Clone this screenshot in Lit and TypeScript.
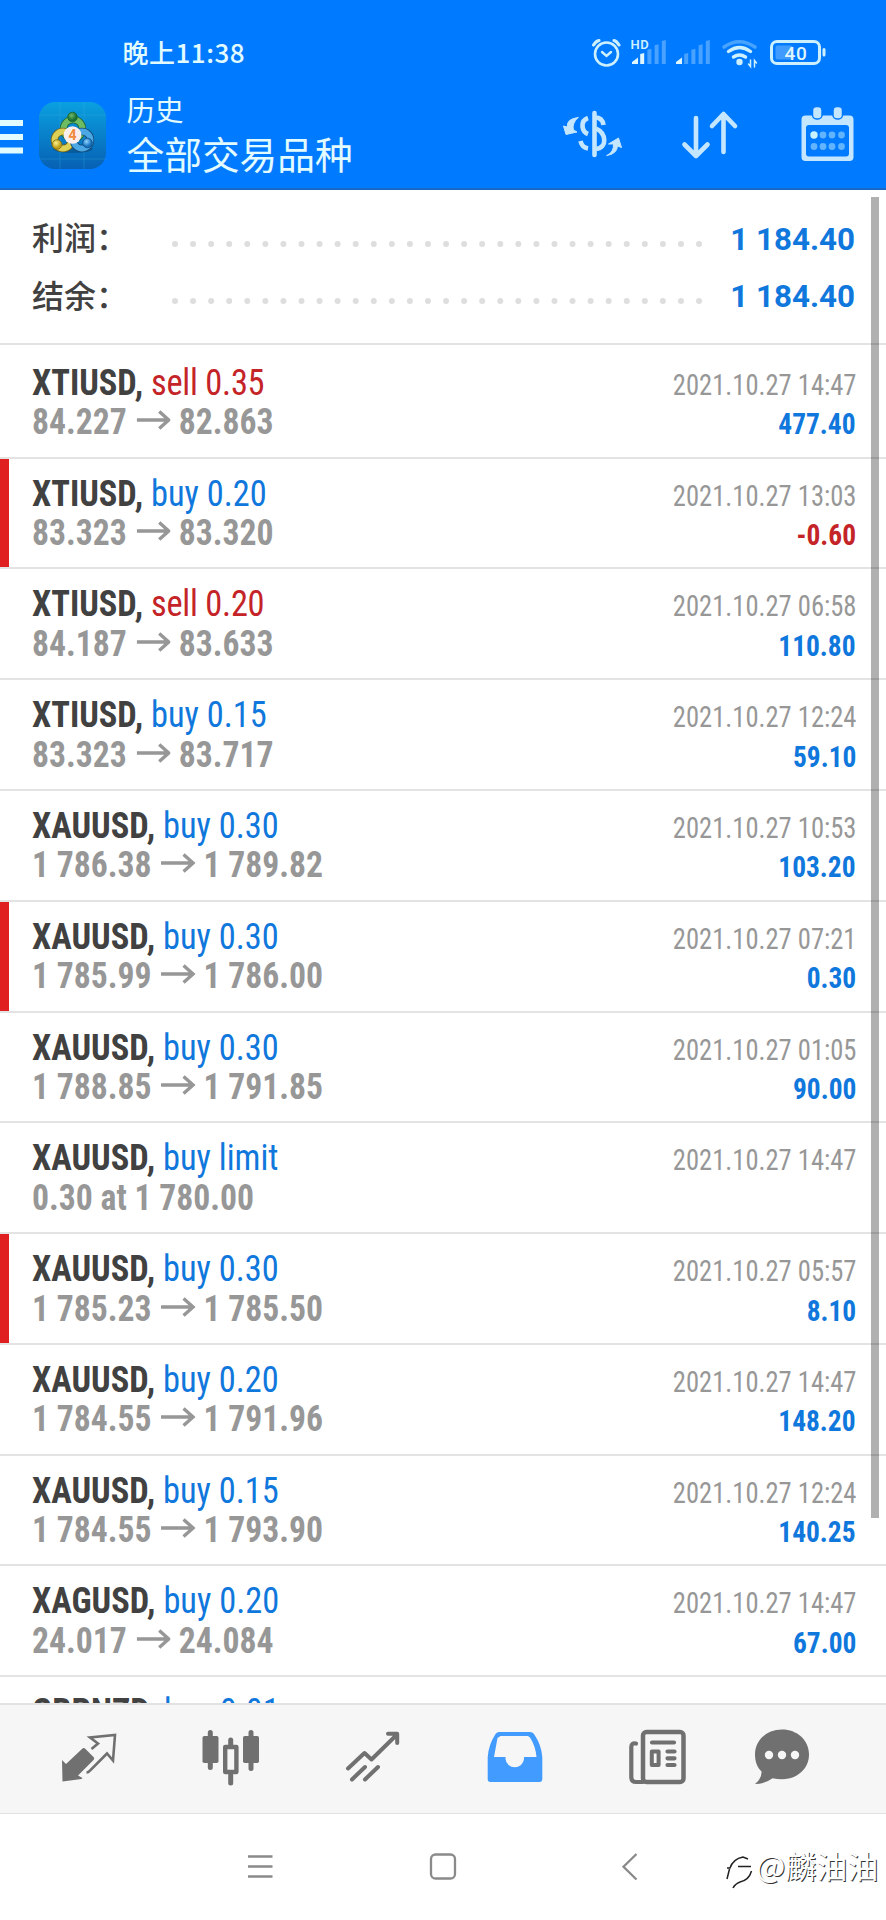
import { LitElement, html, css, svg, nothing } from "lit";
import { customElement, property } from "lit/decorators.js";

interface Deal {
  symbol: string;
  side: string;
  kind: "buy" | "sell";
  from: string;
  to?: string;
  time: string;
  value?: string;
  marked?: boolean;
}

const d = (symbol: string, side: string, from: string, to: string, time: string, value: string, marked = false): Deal => ({
  symbol, side, kind: side.startsWith("sell") ? "sell" : "buy", from, to, time: time && "2021.10.27 " + time, value, marked,
});

const DEALS: Deal[] = [
  d("XTIUSD", "sell 0.35", "84.227", "82.863", "14:47", "477.40"),
  d("XTIUSD", "buy 0.20", "83.323", "83.320", "13:03", "-0.60", true),
  d("XTIUSD", "sell 0.20", "84.187", "83.633", "06:58", "110.80"),
  d("XTIUSD", "buy 0.15", "83.323", "83.717", "12:24", "59.10"),
  d("XAUUSD", "buy 0.30", "1 786.38", "1 789.82", "10:53", "103.20"),
  d("XAUUSD", "buy 0.30", "1 785.99", "1 786.00", "07:21", "0.30", true),
  d("XAUUSD", "buy 0.30", "1 788.85", "1 791.85", "01:05", "90.00"),
  d("XAUUSD", "buy limit", "0.30 at 1 780.00", "", "14:47", ""),
  d("XAUUSD", "buy 0.30", "1 785.23", "1 785.50", "05:57", "8.10", true),
  d("XAUUSD", "buy 0.20", "1 784.55", "1 791.96", "14:47", "148.20"),
  d("XAUUSD", "buy 0.15", "1 784.55", "1 793.90", "12:24", "140.25"),
  d("XAGUSD", "buy 0.20", "24.017", "24.084", "14:47", "67.00"),
  d("GBPNZD", "buy 0.01", "", "", "", ""),
];

@customElement("deal-row")
export class DealRow extends LitElement {
  @property({ attribute: false }) deal!: Deal;
  @property({ type: Boolean }) lead = false;

  static styles = css`
    :host { display: block; }
    .row { display: flex; box-sizing: border-box; height: 110.77px; border-top: 2px solid #e3e3e3; overflow: hidden; }
    .lead { height: 113.3px; padding-top: 2.4px; }
    .mark { width: 9px; flex: none; }
    .on { background: #e02020; }
    .body { flex: 1; padding: 16px 30px 0 23px; }
    .line { display: flex; justify-content: space-between; align-items: baseline; height: 39.5px; line-height: 39.3px;
      font-family: "Roboto Condensed", Roboto, sans-serif; font-stretch: 75%; font-size: 36px; white-space: pre; }
    .head, .price { display: inline-block; transform-origin: 0 50%; }
    .head { transform: scaleX(.955); }
    .sym { font-weight: 700; color: #414141; }
    .buy { color: #1077dc; }
    .sell { color: #c42427; letter-spacing: -.25px; }
    .price { font-weight: 700; color: #979797; transform: scaleX(.935); }
    .arrow { width: 36.4px; height: 20px; margin: 0 8.5px 0 10.5px; vertical-align: 4px; }
    .time, .val { display: inline-block; font-size: 30px; transform-origin: 100% 50%; }
    .time { color: #979797; transform: scaleX(.885); }
    .val { font-weight: 700; color: #1077dc; transform: scaleX(.914); }
    .neg { color: #c42427; }
  `;

  render() {
    const x = this.deal;
    return html`<div class="row ${this.lead ? "lead" : ""}">
      <div class="mark ${x.marked ? "on" : ""}"></div>
      <div class="body">
        <div class="line"><span class="head"><span class="sym">${x.symbol},</span> <span class=${x.kind}>${x.side}</span></span><span class="time">${x.time}</span></div>
        <div class="line"><span class="price">${x.from}${x.to
          ? html`<svg class="arrow" viewBox="0 0 34 20" preserveAspectRatio="none"><path d="M0 10H32M22.5 1.5L32 10L22.5 18.5" fill="none" stroke="#979797" stroke-width="3.4"/></svg>${x.to}`
          : nothing}</span><span class="val ${x.value?.startsWith("-") ? "neg" : ""}">${x.value}</span></div>
      </div>
    </div>`;
  }
}

const bars = (x: number, lit: number) => svg`${[0, 1, 2, 3, 4].map(i => {
  const l = x + i * 7.2 + (i ? 0 : -1), w = i ? 4 : 6;
  const top = 57.5 - i * 4.4;
  return svg`<path d=${`M${l} 64V${i ? top + 1 : 62}L${l + w} ${top}V64Z`} fill="#dff6ff" opacity=${i < lit ? 1 : 0.33}/>`;
})}`;

@customElement("app-root")
export class AppRoot extends LitElement {
  static styles = css`
    :host { display: block; }
    .screen { position: relative; display: flex; flex-direction: column; width: 886px; height: 1920px; background: #fff; overflow: hidden; }
    svg { display: block; flex: none; }
    .top { flex: none; box-sizing: border-box; height: 190px; background: #007aff; border-bottom: 2px solid #1769c6; color: #e2fbff;
      font-family: "Noto Sans CJK SC", sans-serif; }
    .status { display: flex; justify-content: space-between; height: 90px; padding-left: 122.5px; }
    .clock { font-size: 26px; font-weight: 500; line-height: 36px; padding-top: 34px; letter-spacing: .5px; }
    .tools { display: flex; height: 98px; }
    .titles { flex: 1; padding-left: 20.5px; white-space: nowrap; }
    .sub { font-size: 28.5px; line-height: 38px; font-weight: 400; }
    .title { font-size: 37.7px; line-height: 46px; padding-top: 2px; }
    .summary { flex: none; box-sizing: border-box; height: 153.4px; padding: 19px 31px 0 32px; }
    .sum { display: flex; height: 57.5px; align-items: center; }
    .lab { width: 139px; font: 500 32px/54px "Noto Sans CJK SC", sans-serif; height: 57.5px; color: #414141; white-space: nowrap; }
    .dots { margin-top: 12px; }
    .tot { flex: 1; text-align: right; font: 700 32px/60px Roboto, sans-serif; height: 58.5px; color: #1077dc; white-space: pre; transform: scaleX(.98); transform-origin: 100% 50%; }
    .list { flex: 1; min-height: 0; overflow: hidden; }
    .scroll { position: absolute; left: 871px; top: 197px; width: 8px; height: 1321px; background: rgba(0,0,0,.31); }
    .tabs { flex: none; display: flex; box-sizing: border-box; height: 111px; border-top: 2px solid #e2e2e2; border-bottom: 1px solid #e2e2e2; background: #f6f6f6; padding-left: 18px; }
    .sys { flex: none; display: flex; height: 106px; }
    .mark { width: 166px; height: 106px; display: flex; color: #fff; }
    .name { font: 400 31px/46px "Noto Sans CJK SC", sans-serif; padding-top: 28px; white-space: nowrap; text-shadow: 1px 1px 0 #333; }
  `;

  render() {
    const c = "#c4e6ff";
    const g = "#707070";
    return html`<div class="screen">
      <div class="top">
        <div class="status">
          <div class="clock">晚上11:38</div>
          <svg width="306" height="90" viewBox="580 0 306 90" fill="none" stroke="#cdf0ff" stroke-linecap="round">
            <circle cx="606.5" cy="54" r="11.5" stroke-width="2.6"/>
            <path d="M602 52L606.5 56L611 52" stroke-width="2.4"/>
            <path d="M593.5 45Q596 41 599 40.5M619 45Q616.500 41 614 40.500" stroke-width="3.2"/>
            <text x="630.500" y="48.500" font-family="Roboto, sans-serif" font-size="13" font-weight="600" fill="#cdf0ff" stroke="none" letter-spacing=".6">HD</text>
            <g stroke="none">${bars(633, 2)}${bars(677, 1)}</g>
            <path d="M724 47Q739 36.500 755 47" stroke-width="3.600" opacity=".35"/>
            <path d="M728.500 51.500Q739.500 43.500 750.500 51.500M733.500 57Q739.500 53 745.500 57" stroke-width="3.400"/>
            <circle cx="739.500" cy="62" r="3.200" fill="#cdf0ff" stroke="none"/>
            <path d="M750.500 60V66.500L748.500 64M754.500 67V60.500L756.500 63" stroke-width="1.500"/>
            <rect x="771.500" y="41.500" width="48" height="22" rx="5.500" stroke-width="3"/>
            <rect x="775.500" y="45.500" width="17" height="14" rx="2" fill="#fff" opacity=".25" stroke="none"/>
            <rect x="822.500" y="48" width="3" height="8.500" rx="1.500" fill="#cdf0ff" stroke="none"/>
            <text x="784.500" y="60" font-family="Roboto, sans-serif" font-size="19" font-weight="500" fill="#dff6ff" stroke="none" letter-spacing=".6">40</text>
          </svg>
        </div>
        <div class="tools">
          <svg width="106" height="98" viewBox="0 90 106 98">
            <defs>
              <linearGradient id="bg" x1="0" y1="0" x2="0" y2="1"><stop offset="0" stop-color="#0aa0e0"/><stop offset="1" stop-color="#0760b4"/></linearGradient>
              <radialGradient id="gr" cx=".4" cy=".35"><stop offset="0" stop-color="#6fb86c"/><stop offset="1" stop-color="#17702f"/></radialGradient>
              <radialGradient id="ye" cx=".4" cy=".35"><stop offset="0" stop-color="#fbf28a"/><stop offset="1" stop-color="#bd9d1a"/></radialGradient>
              <radialGradient id="bl" cx=".4" cy=".35"><stop offset="0" stop-color="#8fd4ff"/><stop offset="1" stop-color="#146fbd"/></radialGradient>
            </defs>
            <path d="M0 120H23V126H0ZM0 134H23V140H0ZM0 147.500H23V153.500H0Z" fill="#e2fbff"/>
            <rect x="39" y="102" width="67" height="67" rx="16" fill="url(#bg)"/>
            <path d="M60 102V169M84 102V169M39 115H106M39 159H106" stroke="#40b5df" stroke-width=".8" opacity=".35"/>
            <ellipse cx="73" cy="149" rx="20" ry="4" fill="#073e68" opacity=".4"/>
            <circle cx="73" cy="129" r="9.500" fill="none" stroke="#1f6434" stroke-width="7.500"/>
            <circle cx="73" cy="129" r="9.500" fill="none" stroke="#6dbb62" stroke-width="5.800"/>
            <circle cx="63" cy="140" r="8.500" fill="none" stroke="#71641a" stroke-width="7.500"/>
            <circle cx="63" cy="140" r="8.500" fill="none" stroke="#ddd056" stroke-width="5.800"/>
            <circle cx="82" cy="140" r="8.500" fill="none" stroke="#154a7a" stroke-width="7.500"/>
            <circle cx="82" cy="140" r="8.500" fill="none" stroke="#4ba8e4" stroke-width="5.800"/>
            <circle cx="72.500" cy="117" r="4.800" fill="url(#gr)" stroke="#1d6334" stroke-width=".8"/>
            <circle cx="57" cy="144.500" r="4.800" fill="url(#ye)" stroke="#806d12" stroke-width=".8"/>
            <circle cx="87.500" cy="143" r="4.800" fill="url(#bl)" stroke="#134f86" stroke-width=".8"/>
            <circle cx="72.500" cy="135" r="8.800" fill="#f8eeee"/>
            <text x="72.500" y="140" text-anchor="middle" font-family="Roboto, sans-serif" font-size="14" font-weight="700" fill="#f08a3c">4</text>
          </svg>
          <div class="titles"><div class="sub">历史</div><div class="title">全部交易品种</div></div>
          <svg width="336" height="98" viewBox="550 90 336 98" fill="none" stroke=${c} stroke-linecap="round" stroke-linejoin="round">
            <path d="M594.500 113V155" stroke-width="4.600"/>
            <path d="M588 118Q582 120 582.500 126.500Q583 132 588 134" stroke-width="4.600" stroke-linecap="butt"/>
            <path d="M580.500 141Q582 147.500 588 148.500" stroke-width="4.600" stroke-linecap="butt"/>
            <path d="M595 117.500Q602.500 117.500 603.500 125" stroke-width="4.600" stroke-linecap="butt"/>
            <path d="M596 128.500C606 133 608 147.500 596 149" stroke-width="4.600" stroke-linecap="butt"/>
            <path d="M578 117.500Q566 119 567.500 127L563.500 126L566 134.500L577 132L573.500 130Q571.500 124 578 117.500Z" fill=${c} stroke-width="1"/>
            <path d="M607 155.500Q614 152 613.500 144L608.500 144L618.500 138L621.500 147.500L617.500 146Q617 154 607 155.500Z" fill=${c} stroke-width="1"/>
            <path d="M696 118V155M684.500 144.500L696 156L707.500 144.500M723.500 152V115M712 126L723.500 114L735 126" stroke-width="4.600"/>
            <path fill-rule="evenodd" d="M805.500 115.500H849.500Q853.500 115.500 853.500 119.500V157Q853.500 161 849.500 161H805.500Q801.500 161 801.500 157V119.500Q801.500 115.500 805.500 115.500ZM809 125Q806 125 806 128V153.500Q806 156.500 809 156.500H846Q849 156.500 849 153.500V128Q849 125 846 125Z" fill=${c} stroke="none"/>
            <rect x="812.500" y="106.500" width="9.500" height="12.500" rx="4" fill=${c} stroke="#007aff" stroke-width="1.500"/>
            <rect x="833" y="106.500" width="9.500" height="12.500" rx="4" fill=${c} stroke="#007aff" stroke-width="1.500"/>
            <g stroke="none" fill="#62b4ff">
              <circle cx="814" cy="135" r="3.700" fill="#c9f2ff"/><circle cx="823" cy="135" r="3.400"/><circle cx="832" cy="135" r="3.400"/><circle cx="841.500" cy="135" r="3.400"/>
              <circle cx="814" cy="146.500" r="3.400"/><circle cx="823" cy="146.500" r="3.400"/><circle cx="832" cy="146.500" r="3.400"/><circle cx="841.500" cy="146.500" r="3.400"/>
            </g>
          </svg>
        </div>
      </div>
      <div class="summary">
        ${["利润：", "结余："].map(t => html`<div class="sum"><span class="lab">${t}</span>
          <svg class="dots" width="534" height="6" viewBox="0 0 534 6"><path d="M4 3H530" stroke="#dedede" stroke-width="6" stroke-linecap="round" stroke-dasharray="0 18.07"/></svg>
          <span class="tot">1 184.40</span></div>`)}
      </div>
      <div class="list">
        ${DEALS.map((x, i) => html`<deal-row ?lead=${i === 0} .deal=${x}></deal-row>`)}
      </div>
      <div class="tabs">
        <svg width="142" height="108" viewBox="18 1705 142 108" fill="none" stroke=${g}>
          <path d="M62 1760L66 1764L82.500 1748.500Q84 1747.500 85.500 1749L94 1757.500Q94.500 1759 93.500 1760L78 1775.500L82.500 1778L81.500 1779L62.500 1781.500Z" fill=${g} stroke="none"/>
          <path d="M91.500 1749L98 1743.500L90 1737.500L115 1735L113 1760.500L107 1753.500L90 1770.500Q88.500 1772.500 86.500 1772.500" stroke-width="2.600"/>
        </svg>
        <svg width="141" height="108" viewBox="160 1705 141 108" fill="none" stroke=${g} stroke-linecap="round">
          <path d="M210.300 1732.500V1767.500M251 1732.500V1768.500M230.700 1740V1746M230.700 1775V1783" stroke-width="5"/>
          <rect x="202.500" y="1736" width="16" height="27" rx="1.800" fill=${g} stroke="none"/>
          <rect x="243" y="1736" width="16" height="27" rx="1.800" fill=${g} stroke="none"/>
          <rect x="225.200" y="1747" width="11.200" height="25" stroke-width="4.400" stroke-linejoin="round"/>
        </svg>
        <svg width="143" height="108" viewBox="301 1705 143 108" fill="none" stroke=${g} stroke-linecap="round" stroke-linejoin="round">
          <path d="M348 1768.500L364.500 1753L371.500 1759.500L397 1734.500M388 1733.800H397.200V1743M352 1779.500L365 1767M365 1779.500L378 1767" stroke-width="4"/>
        </svg>
        <svg width="142" height="108" viewBox="444 1705 142 108">
          <path fill-rule="evenodd" fill="#429bff" d="M499 1732H530Q532.500 1732 534 1734Q541.500 1745 542.300 1757V1779Q542.300 1782 539.500 1782H490.500Q487.700 1782 487.700 1779V1757Q488.500 1745 495.500 1734Q497 1732 499 1732ZM500.500 1736L497.500 1738L494 1757H505.500V1759A9.300 9.300 0 0 0 524 1759V1757H536.500Q535.500 1746 530 1737.500L528 1736Z"/>
        </svg>
        <svg width="143" height="108" viewBox="586 1705 143 108" fill="none" stroke=${g} stroke-linecap="round" stroke-linejoin="round">
          <rect x="643" y="1732" width="40.500" height="50" rx="3.500" stroke-width="4.500"/>
          <path d="M636 1743.500Q631.300 1742.500 631.300 1747V1777Q631.300 1782 636 1782H643" stroke-width="4.200"/>
          <path d="M652 1742.500H674M667.500 1751.500H674.500M667.500 1758.300H674.500M667.500 1765H674.500" stroke-width="4.200"/>
          <rect x="651.800" y="1751.500" width="6.800" height="13.500" stroke-width="4"/>
        </svg>
        <svg width="106" height="108" viewBox="729 1705 106 108">
          <path fill=${g} d="M782 1729.500C797 1729.500 809 1740 809 1754.500C809 1769 797 1779.200 782 1779.200Q777 1779.200 772.500 1778.200Q765 1784 755 1784Q762 1778.500 761.500 1771.500C757 1767 755 1761.500 755 1754.500C755 1740 767 1729.500 782 1729.500Z"/>
          <g fill="#f6f6f6"><circle cx="769" cy="1755" r="4.200"/><circle cx="782" cy="1755" r="4.200"/><circle cx="795" cy="1755" r="4.200"/></g>
        </svg>
      </div>
      <div class="sys">
        <svg width="720" height="106" viewBox="0 1814 720 106" fill="none" stroke="#8a8a8a" stroke-width="2.300">
          <path d="M248 1856.500H272.500M248 1866.500H272.500M248 1876.500H272.500"/>
          <rect x="431" y="1854.500" width="24" height="24" rx="4.500"/>
          <path d="M636.500 1854L623.500 1866.800L636.500 1879.500"/>
        </svg>
        <div class="mark">
          <svg width="36" height="106" viewBox="720 1814 36 106" fill="none" stroke="#222" stroke-width="1.500">
            <path d="M738 1866.500H751M727 1868H730Q733 1859 743 1857L748 1859M729.500 1869L727 1879M751.500 1871Q749 1880 740 1882Q735 1884 733 1888"/>
          </svg>
          <span class="name">@麟油油</span>
        </div>
      </div>
      <div class="scroll"></div>
    </div>`;
  }
}
